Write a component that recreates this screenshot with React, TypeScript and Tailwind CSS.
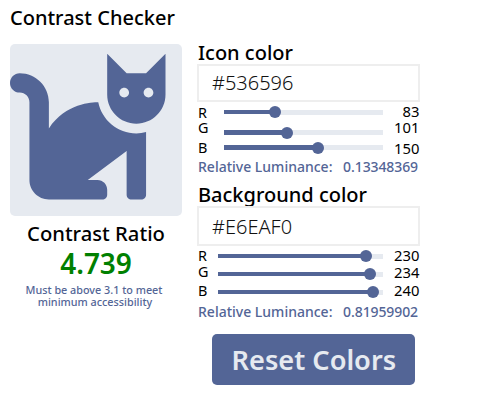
import { FaCat } from "react-icons/fa";

type Channel = { name: string; value: number; label: string; track: string; num: string; fill: string };
type PanelProps = {
  title: string;
  hex: string;
  channels: Channel[];
  boxHeight: string;
  rowsHeight: string;
  trackBox: string;
  luminance: string;
};

function Panel({ title, hex, channels, boxHeight, rowsHeight, trackBox, luminance }: PanelProps) {
  return (
    <section className="flex w-[222px] flex-col">
      <h2 className="h-[25px] text-[20px] leading-[28px] font-medium whitespace-nowrap">{title}</h2>
      <div className={`-ml-px flex w-[223px] items-center border-2 border-[#eeeeee] pl-[13px] text-[20px] leading-[34px] font-light text-[#111] ${boxHeight}`}>
        <span>{hex}</span>
      </div>
      <div className={`flex justify-between text-[14.4px] ${rowsHeight}`}>
        <div className="flex w-[14px] flex-col">
          {channels.map((c) => (
            <span key={c.name} className={`leading-[18px] ${c.label}`}>{c.name}</span>
          ))}
        </div>
        <div className={`flex flex-col ${trackBox}`}>
          {channels.map((c) => (
            <div key={c.name} className={`flex h-[12px] items-center ${c.track}`}>
              <div className={`h-[4.5px] bg-[#536596] ${c.fill}`} />
              <div className="z-10 -mx-[6px] size-[12px] shrink-0 rounded-full bg-[#536596]" />
              <div className="h-[5px] flex-1 bg-[#e6eaf0]" />
            </div>
          ))}
        </div>
        <div className="flex w-[37px] flex-col pr-[0.5px] text-right text-[14.8px]">
          {channels.map((c) => (
            <span key={c.name} className={`leading-[18px] ${c.num}`}>{c.value}</span>
          ))}
        </div>
      </div>
      <div className="flex h-[20px] justify-between pr-[2px] text-[14px] leading-[20px] font-medium text-[#536596]">
        <span>Relative Luminance:</span>
        <span className="tracking-[-0.1px]">{luminance}</span>
      </div>
    </section>
  );
}

const icon: Channel[] = [
  { name: "R", value: 83, label: "mt-[2px]", track: "mt-[4px]", num: "mt-0", fill: "w-[51px]" },
  { name: "G", value: 101, label: "-mt-[3px]", track: "mt-[8.5px]", num: "-mt-[2px]", fill: "w-[63px]" },
  { name: "B", value: 150, label: "mt-[2px]", track: "mt-[3px]", num: "mt-[3px]", fill: "w-[94px]" },
];
const background: Channel[] = [
  { name: "R", value: 230, label: "mt-[1px]", track: "mt-[4px]", num: "mt-0", fill: "w-[148px]" },
  { name: "G", value: 234, label: "-mt-[2px]", track: "mt-[6px]", num: "-mt-[1px]", fill: "w-[151.5px]" },
  { name: "B", value: 240, label: "mt-[1px]", track: "mt-[6px]", num: "mt-0", fill: "w-[155px]" },
];

export default function App() {
  return (
    <main className="h-[413px] w-[500px] overflow-hidden bg-white pt-[4px] pl-[10px] font-['Noto_Sans',sans-serif] text-black">
      <h1 className="h-[28px] text-[20px] leading-[28px] font-medium">Contrast Checker</h1>
      <div className="flex gap-[16px]">
        <div className="flex w-[172px] flex-col pt-[12px] text-center">
          <div className="h-[172px] rounded-[5px] bg-[#e6eaf0]">
            <FaCat className="size-[155.5px] text-[#536596]" />
          </div>
          <h2 className="mt-[3px] h-[28px] text-[20.2px] leading-[28px] font-medium">Contrast Ratio</h2>
          <p className="h-[34px] text-[28px] leading-[32px] font-[560] tracking-[-0.1px] text-[#008000]">4.739</p>
          <p className="mt-[3px] pr-[4px] text-[10.8px] leading-[12px] font-medium text-[#536596]">
            Must be above 3.1 to meet
            <br />
            <span className="pl-[2px]">minimum accessibility</span>
          </p>
        </div>
        <div className="flex flex-col pt-[7px]">
          <Panel title="Icon color" hex="#536596" channels={icon} boxHeight="h-[38px]" rowsHeight="h-[55px]" trackBox="w-[159px] ml-[12px]" luminance="0.13348369" />
          <div className="mt-[4px]">
            <Panel title="Background color" hex="#E6EAF0" channels={background} boxHeight="h-[40px] pt-px" rowsHeight="h-[56px]" trackBox="w-[165px] ml-[6px]" luminance="0.81959902" />
          </div>
          <button className="mt-[11.5px] ml-[14.3px] h-[51px] w-[203px] rounded-[5px] bg-[#536596] text-[27.2px] leading-[51px] font-semibold text-[#e6eaf0]">Reset Colors</button>
        </div>
      </div>
    </main>
  );
}
